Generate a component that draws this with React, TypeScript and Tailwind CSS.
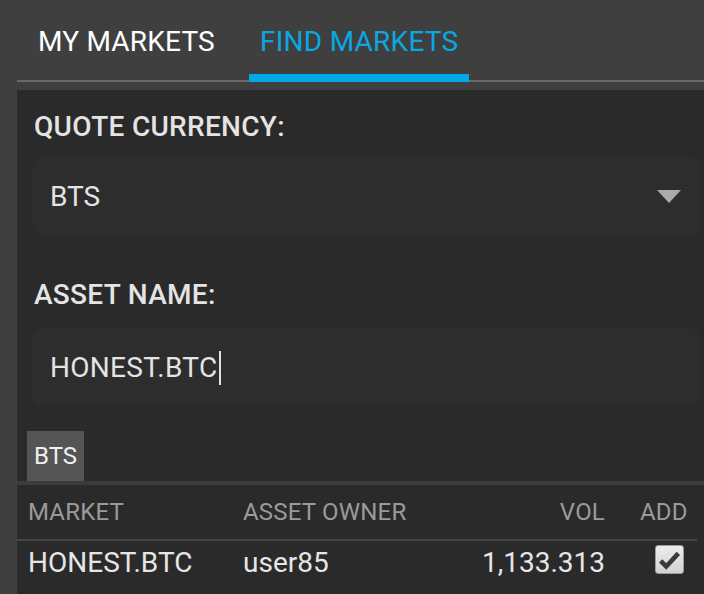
import React from 'react'

const font = { fontFamily: 'Roboto, "Noto Sans", sans-serif' }

function CheckBox() {
  return (
    <div className="w-[29px] h-[29px] rounded-[3px] border border-[#9a9a9a] bg-gradient-to-b from-[#ececec] to-[#d2d2d2] flex items-center justify-center">
      <svg width="29" height="29" viewBox="0 0 29 29">
        <polyline points="5,16 11,22 24,8" fill="none" stroke="#3a3a3a" strokeWidth="5" strokeLinejoin="miter" />
      </svg>
    </div>
  )
}

export default function App() {
  return (
    <div className="w-[704px] h-[594px] overflow-hidden bg-[#3f3f3f] pl-[17px] flex flex-col" style={font}>
      {/* tabs */}
      <div className="flex shrink-0">
        <div className="w-[232px] h-[82px] pl-[21px] pt-[28px] border-b-2 border-[#686868] text-[28px] leading-[28px] tracking-[0.2px] text-white">
          MY MARKETS
        </div>
        <div className="w-[220px] h-[82px] pl-[11px] pt-[28px] border-b-8 border-[#00a8e6] text-[28px] leading-[28px] tracking-[0.25px] text-[#0aa8e2]">
          FIND MARKETS
        </div>
        <div className="flex-1 h-[82px] border-b-2 border-[#686868]" />
      </div>

      {/* panel */}
      <div className="mt-[8px] flex-1 bg-[#2a2a2a] flex flex-col">
        <div className="pl-[16px] pr-[4px] pt-[23px]">
          <div className="pl-[1px] text-[28px] leading-[28px] font-medium tracking-[0.3px] text-[#e4e4e4]">QUOTE CURRENCY:</div>
          <div className="mt-[17px] h-[77px] rounded-[8px] bg-[#2d2d2d] flex items-center justify-between pl-[17px] pr-[19px]">
            <span className="text-[28px] leading-[28px] text-[#e4e4e4]">BTS</span>
            <svg width="24" height="13" viewBox="0 0 24 13">
              <polygon points="0,0 24,0 12,13" fill="#ababab" />
            </svg>
          </div>

          <div className="mt-[46px] pl-[1px] text-[28px] leading-[28px] font-medium tracking-[0.3px] text-[#e4e4e4]">ASSET NAME:</div>
          <div className="mt-[20px] h-[77px] rounded-[8px] bg-[#2d2d2d] flex items-center pl-[17px]">
            <span className="text-[28px] leading-[28px] tracking-[0.3px] text-[#e4e4e4]">HONEST.BTC</span>
            <span className="w-[2px] h-[34px] bg-[#e0e0e0] ml-[1px]" />
          </div>
        </div>

        <div className="mt-[25px] pl-[10px] flex">
          <div className="h-[50px] px-[7px] bg-[#555555] flex items-center text-[24px] leading-[24px] text-[#f0f0f0]">BTS</div>
        </div>
        <div className="h-[4px] bg-[#3c3c3c]" />

        <div className="mr-[7px]">
          <div className="h-[56px] flex items-center pl-[11px] pr-[11px] border-b-2 border-[#454545] text-[24px] leading-[24px] tracking-[0.2px] text-[#9a9a9a]">
            <div className="w-[215px]">MARKET</div>
            <div className="flex-1">ASSET OWNER</div>
            <div className="text-right">VOL</div>
            <div className="w-[46px] ml-[35px]">ADD</div>
          </div>
          <div className="flex items-start pl-[11px] pr-[11px] text-[28px] leading-[28px] text-[#e6e6e6]">
            <div className="w-[215px] pt-[8px]">HONEST.BTC</div>
            <div className="flex-1 pt-[8px]">user85</div>
            <div className="text-right pt-[8px]">1,133.313</div>
            <div className="w-[46px] ml-[35px] pt-[4px] pl-[15px]">
              <CheckBox />
            </div>
          </div>
        </div>
      </div>
    </div>
  )
}
